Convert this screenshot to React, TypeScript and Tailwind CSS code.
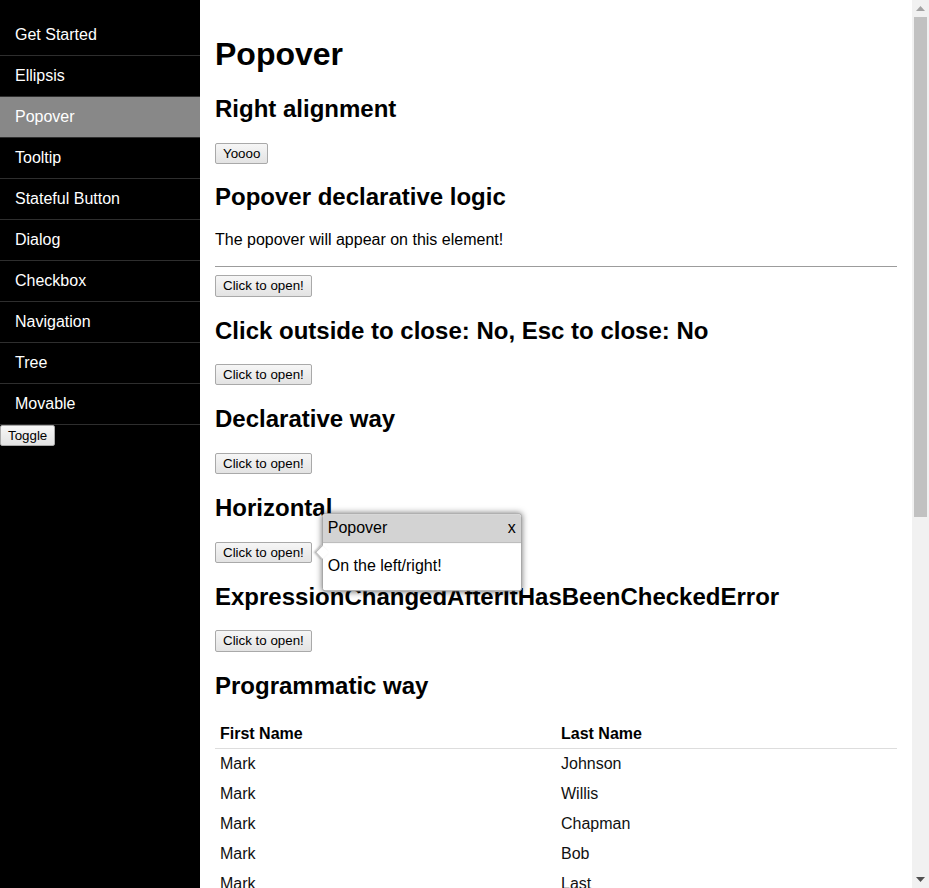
import React from "react";

const navItems = [
  "Get Started",
  "Ellipsis",
  "Popover",
  "Tooltip",
  "Stateful Button",
  "Dialog",
  "Checkbox",
  "Navigation",
  "Tree",
  "Movable",
];

const people = [
  ["Mark", "Johnson"],
  ["Mark", "Willis"],
  ["Mark", "Chapman"],
  ["Mark", "Bob"],
  ["Mark", "Last"],
];

function Btn({ children }: { children: React.ReactNode }) {
  return (
    <button className="block border border-[#a9a9a9] bg-gradient-to-b from-[#f6f6f6] to-[#e3e3e3] px-[7px] py-[2px] text-[13.33px] leading-[15.33px] text-black rounded-[2px]">
      {children}
    </button>
  );
}

function Section({ title, children }: { title: string; children: React.ReactNode }) {
  return (
    <>
      <h2 className="mt-[19.92px] text-[24px] font-bold leading-[27.6px]">{title}</h2>
      <div className="mt-[19.92px] flex">{children}</div>
    </>
  );
}

function ScrollBar() {
  return (
    <div className="flex w-[17px] shrink-0 flex-col bg-[#f1f1f1]">
      <div className="flex h-[17px] items-center justify-center">
        <svg width="9" height="5" viewBox="0 0 9 5">
          <polygon points="4.5,0 9,5 0,5" fill="#a3a3a3" />
        </svg>
      </div>
      <div className="mx-[2px] h-[500px] bg-[#c1c1c1]" />
      <div className="flex-1" />
      <div className="flex h-[17px] items-center justify-center">
        <svg width="9" height="5" viewBox="0 0 9 5">
          <polygon points="0,0 9,0 4.5,5" fill="#505050" />
        </svg>
      </div>
    </div>
  );
}

export default function App() {
  return (
    <div className="flex h-screen overflow-hidden font-['Liberation_Sans',Arial,sans-serif] text-black">
      <aside className="w-[200px] shrink-0 bg-black pt-[15px]">
        <ul>
          {navItems.map((item) => (
            <li
              key={item}
              className={`flex h-[41px] items-center border-b border-[#2e2e2e] px-[15px] text-[16px] leading-[18.4px] text-white ${
                item === "Popover" ? "bg-[#888888]" : ""
              }`}
            >
              {item}
            </li>
          ))}
        </ul>
        <div className="flex">
          <Btn>Toggle</Btn>
        </div>
      </aside>

      <main className="min-w-0 flex-1 overflow-hidden bg-white px-[15px] pt-[15px] leading-[18.4px]">
        <h1 className="mt-[21.44px] text-[32px] font-bold leading-[36.8px]">Popover</h1>

        <h2 className="mt-[21.44px] text-[24px] font-bold leading-[27.6px]">Right alignment</h2>
        <div className="mt-[20.4px] flex">
          <Btn>Yoooo</Btn>
        </div>

        <h2 className="mt-[19.5px] text-[24px] font-bold leading-[27.6px]">Popover declarative logic</h2>
        <p className="mt-[19.92px] text-[16px] leading-[18.4px]">The popover will appear on this element!</p>
        <hr className="mt-[16.5px] border-t border-[#9c9c9c]" />
        <div className="mt-[8.5px] flex">
          <Btn>Click to open!</Btn>
        </div>

        <Section title="Click outside to close: No, Esc to close: No">
          <Btn>Click to open!</Btn>
        </Section>

        <Section title="Declarative way">
          <Btn>Click to open!</Btn>
        </Section>

        <Section title="Horizontal">
          <div className="relative">
            <Btn>Click to open!</Btn>
            <div className="absolute left-[calc(100%+10px)] top-1/2 z-10 w-[200px] -translate-y-1/2 rounded-[3px] border border-[#a8a8a8] bg-white shadow-[0_0_6px_rgba(0,0,0,0.55)]">
              <div className="absolute left-[-6px] top-1/2 h-[10px] w-[10px] -translate-y-1/2 rotate-45 border-b border-l border-[#b5b5b5] bg-white shadow-[-1px_1px_2px_rgba(0,0,0,0.25)]" />
              <div className="relative flex h-[29px] items-center justify-between rounded-t-[3px] border-b border-[#a0a0a0] bg-[#d3d3d3] px-[5px] text-[16px]">
                <span>Popover</span>
                <span>x</span>
              </div>
              <div className="relative px-[5px] py-[14px] text-[16px] leading-[18.4px]">On the left/right!</div>
            </div>
          </div>
        </Section>

        <Section title="ExpressionChangedAfterItHasBeenCheckedError">
          <Btn>Click to open!</Btn>
        </Section>

        <h2 className="mt-[19.92px] text-[24px] font-bold leading-[27.6px]">Programmatic way</h2>
        <table className="mt-[19.92px] w-full table-fixed border-collapse text-[16px] leading-[18.4px]">
          <thead>
            <tr className="border-b border-[#dddddd]">
              <th className="px-[5px] pt-[5.8px] pb-[4.8px] text-left font-bold">First Name</th>
              <th className="px-[5px] pt-[5.8px] pb-[4.8px] text-left font-bold">Last Name</th>
            </tr>
          </thead>
          <tbody>
            {people.map(([first, last]) => (
              <tr key={last}>
                <td className="px-[5px] py-[5.8px] text-[#111]">{first}</td>
                <td className="px-[5px] py-[5.8px] text-[#111]">{last}</td>
              </tr>
            ))}
          </tbody>
        </table>
      </main>

      <ScrollBar />
    </div>
  );
}
